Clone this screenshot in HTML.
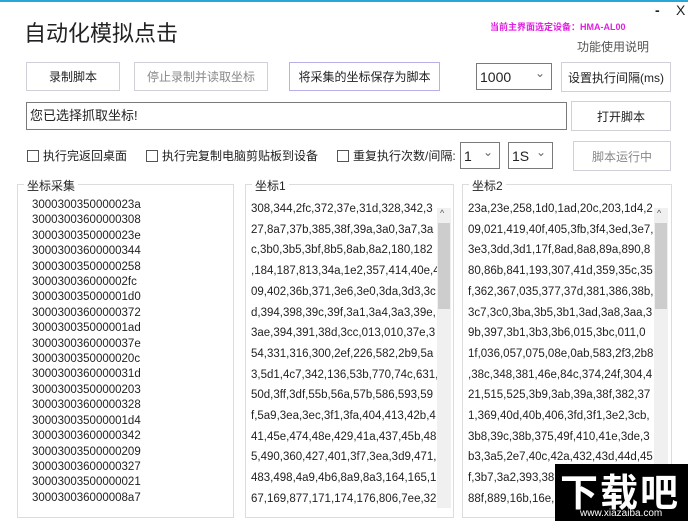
<!DOCTYPE html>
<html><head><meta charset="utf-8"><style>
*{margin:0;padding:0;box-sizing:border-box}
body{width:688px;height:521px;background:#fff;font-family:"Liberation Sans","Noto Sans CJK SC",sans-serif;color:#222;position:relative;overflow:hidden;font-size:12px}
.a{position:absolute;white-space:nowrap}
.btn{position:absolute;border:1px solid #d0d0d8;background:#fff;display:flex;align-items:center;justify-content:center;font-size:12px;color:#222}
.sel{position:absolute;border:1px solid #7a7a7a;background:#fff;font-size:14px;padding-left:3px;line-height:26px}
.sel:after{content:"⌄";position:absolute;right:6px;top:-4px;font-size:12px;color:#666}
.cb{position:absolute;width:12px;height:12px;border:1px solid #555;background:#fff}
.grp{position:absolute;border:1px solid #dcdcdc;top:184px;height:334px}
.lg{position:absolute;top:-8px;left:6px;background:#fff;padding:0 3px;font-size:12px}
.sb{position:absolute;width:14px;background:#f0f0f0}
.th{position:absolute;left:1px;width:12px;background:#cdcdcd}
.txt{position:absolute;font-size:11.5px;line-height:20.7px;white-space:nowrap;color:#222}
</style></head><body>
<div class="a" style="left:0;top:0;width:688px;height:2px;background:#2aa6d8"></div>
<div class="a" style="left:24px;top:16px;font-size:22px;color:#222">自动化模拟点击</div>
<div class="a" style="left:490px;top:20px;font-size:9px;font-weight:bold;color:#e020e0">当前主界面选定设备：HMA-AL00</div>
<div class="a" style="left:577px;top:38px;font-size:12px;color:#555">功能使用说明</div>
<div class="a" style="left:655px;top:2px;font-size:14px;font-weight:bold">-</div>
<div class="a" style="left:676px;top:2px;font-size:14px">X</div>
<div class="btn" style="left:26px;top:62px;width:94px;height:29px">录制脚本</div>
<div class="btn" style="left:134px;top:62px;width:134px;height:29px;color:#888">停止录制并读取坐标</div>
<div class="btn" style="left:289px;top:62px;width:151px;height:29px;border-color:#b8b0e8">将采集的坐标保存为脚本</div>
<div class="sel" style="left:476px;top:63px;width:76px;height:27px">1000</div>
<div class="btn" style="left:561px;top:62px;width:110px;height:30px">设置执行间隔(ms)</div>
<div class="a" style="left:26px;top:102px;width:541px;height:28px;border:1px solid #7a7a7a;padding-left:3px;line-height:26px;font-size:13px">您已选择抓取坐标!</div>
<div class="btn" style="left:571px;top:101px;width:100px;height:30px">打开脚本</div>
<div class="cb" style="left:27px;top:150px"></div><div class="a" style="left:43px;top:147px;font-size:12px">执行完返回桌面</div>
<div class="cb" style="left:146px;top:150px"></div><div class="a" style="left:162px;top:147px;font-size:12px">执行完复制电脑剪贴板到设备</div>
<div class="cb" style="left:337px;top:150px"></div><div class="a" style="left:353px;top:147px;font-size:12px">重复执行次数/间隔:</div>
<div class="sel" style="left:460px;top:142px;width:40px;height:27px">1</div>
<div class="sel" style="left:508px;top:142px;width:45px;height:27px">1S</div>
<div class="btn" style="left:573px;top:141px;width:98px;height:30px;color:#888">脚本运行中</div>

<div class="grp" style="left:17px;width:217px"><div class="lg">坐标采集</div>
<div class="txt" style="left:14px;top:13px;line-height:15.4px">3000300350000023a<br>30003003600000308<br>3000300350000023e<br>30003003600000344<br>30003003500000258<br>300030036000002fc<br>300030035000001d0<br>30003003600000372<br>300030035000001ad<br>3000300360000037e<br>3000300350000020c<br>3000300360000031d<br>30003003500000203<br>30003003600000328<br>300030035000001d4<br>30003003600000342<br>30003003500000209<br>30003003600000327<br>30003003500000021<br>300030036000008a7</div></div>

<div class="grp" style="left:245px;width:209px"><div class="lg">坐标1</div>
<div class="txt" style="left:5px;top:14px">308,344,2fc,372,37e,31d,328,342,3<br>27,8a7,37b,385,38f,39a,3a0,3a7,3a<br>c,3b0,3b5,3bf,8b5,8ab,8a2,180,182<br>,184,187,813,34a,1e2,357,414,40e,4<br>09,402,36b,371,3e6,3e0,3da,3d3,3c<br>d,394,398,39c,39f,3a1,3a4,3a3,39e,<br>3ae,394,391,38d,3cc,013,010,37e,3<br>54,331,316,300,2ef,226,582,2b9,5a<br>3,5d1,4c7,342,136,53b,770,74c,631,<br>50d,3ff,3df,55b,56a,57b,586,593,59<br>f,5a9,3ea,3ec,3f1,3fa,404,413,42b,4<br>41,45e,474,48e,429,41a,437,45b,48<br>5,490,360,427,401,3f7,3ea,3d9,471,<br>483,498,4a9,4b6,8a9,8a3,164,165,1<br>67,169,877,171,174,176,806,7ee,32</div>
<div class="sb" style="left:191px;top:23px;height:300px"><div class="th" style="top:15px;height:86px"></div><div class="a" style="left:3px;top:0;font-size:9px;color:#555">^</div></div></div>

<div class="grp" style="left:462px;width:210px"><div class="lg">坐标2</div>
<div class="txt" style="left:5px;top:14px">23a,23e,258,1d0,1ad,20c,203,1d4,2<br>09,021,419,40f,405,3fb,3f4,3ed,3e7,<br>3e3,3dd,3d1,17f,8ad,8a8,89a,890,8<br>80,86b,841,193,307,41d,359,35c,35<br>f,362,367,035,377,37d,381,386,38b,<br>3c7,3c0,3ba,3b5,3b1,3ad,3a8,3aa,3<br>9b,397,3b1,3b3,3b6,015,3bc,011,0<br>1f,036,057,075,08e,0ab,583,2f3,2b8<br>,38c,348,381,46e,84c,374,24f,304,4<br>21,515,525,3b9,3ab,39a,38f,382,37<br>1,369,40d,40b,406,3fd,3f1,3e2,3cb,<br>3b8,39c,38b,375,49f,410,41e,3de,3<br>b3,3a5,2e7,40c,42a,432,43d,44d,45<br>f,3b7,3a2,393,38<br>88f,889,16b,16e,</div>
<div class="sb" style="left:191px;top:23px;height:300px"><div class="th" style="top:15px;height:86px"></div><div class="a" style="left:3px;top:0;font-size:9px;color:#555">^</div></div></div>

<div class="a" style="left:555px;top:464px;width:133px;height:57px;background:#000"></div>
<div class="a" style="left:560px;top:462px;font-size:38px;font-weight:bold;color:#fff;letter-spacing:2px">下载吧</div>
<div class="a" style="left:580px;top:508px;font-size:10px;color:#fff">www.xiazaiba.com</div>
</body></html>
